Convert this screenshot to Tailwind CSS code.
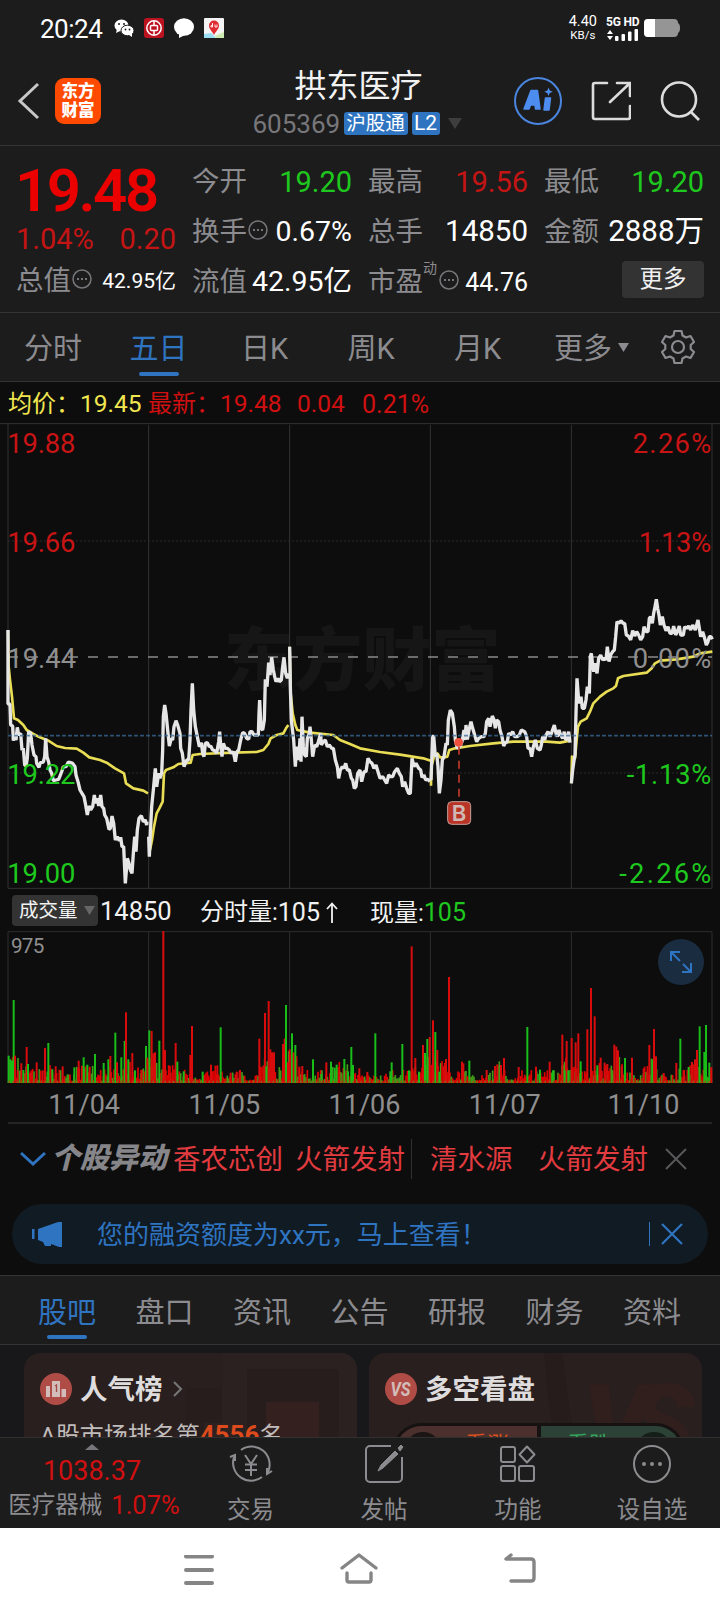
<!DOCTYPE html>
<html lang="zh-CN">
<head>
    <meta charset="UTF-8">
    <meta name="viewport" content="width=device-width, initial-scale=1.0">
    <title>拱东医疗 605369</title>
    <script src="https://cdn.jsdelivr.net/npm/@tailwindcss/browser@4"></script>
    <style>
        body { font-family: 'Roboto', 'Noto Sans CJK SC', sans-serif; }
    </style>
</head>
<body class="w-[720px] h-[1612px] overflow-hidden bg-[#0d0d0d] text-[#8c8c90] leading-none whitespace-nowrap">
    <!-- Barra de estado -->
    <div class="h-14 bg-[#1c1c1c] flex items-center justify-between pl-10 pr-10">
        <div class="flex items-center gap-[10px] text-white">
            <span class="text-[26px] tracking-[-0.5px] w-16 pt-px">20:24</span>
            <svg width="20" height="18" viewBox="0 0 20 18">
                <ellipse cx="7.5" cy="6.5" rx="7" ry="6" fill="#fff"/><path d="M3 10l-1 4 4-2z" fill="#fff"/>
                <ellipse cx="13.5" cy="11.5" rx="6.5" ry="5.3" fill="#fff" stroke="#1c1c1c"/><path d="M15 16l3 2v-4z" fill="#fff"/>
                <g fill="#1c1c1c"><circle cx="5" cy="5" r="1"/><circle cx="10" cy="5" r="1"/><circle cx="11.5" cy="10.5" r=".9"/><circle cx="15.5" cy="10.5" r=".9"/></g>
            </svg>
            <svg width="20" height="20" viewBox="0 0 20 20">
                <rect width="20" height="20" rx="3" fill="#bd1320"/>
                <g fill="none" stroke="#fff" stroke-width="1.5"><circle cx="10" cy="10" r="7.2"/><rect x="6.5" y="7.5" width="7" height="5" rx="1"/><path d="M10 3v4.500M10 12.500V17"/></g>
            </svg>
            <svg width="20" height="20" viewBox="0 0 20 20"><ellipse cx="10" cy="9" rx="10" ry="8.800" fill="#fff"/><path d="M5 15v5l6-3z" fill="#fff"/></svg>
            <svg width="20" height="20" viewBox="0 0 20 20">
                <rect width="20" height="20" rx="1" fill="#f4f4f4"/><path d="M0 16l7-1 5 5H0z" fill="#9adcf2"/><path d="M11 18l9-4v6h-8z" fill="#cdeab0"/>
                <path d="M10 17C8 13 5 11 5 7.500a5 5 0 0110 0C15 11 12 13 10 17z" fill="#e02b30"/><path d="M8.500 5v4H7V7.500h1.500M11 6.500V9h2V6.500" fill="none" stroke="#fff" stroke-width=".9"/>
            </svg>
        </div>
        <div class="flex items-center gap-[9px] text-white">
            <div class="text-center">
                <div class="text-[14.500px] h-[15px]">4.40</div>
                <div class="text-[11.500px] h-[11px]">KB/s</div>
            </div>
            <div class="w-[33px]">
                <div class="text-[12px] font-bold h-[14px] pt-px tracking-[-0.2px]">5G HD</div>
                <svg width="33" height="12" viewBox="0 0 33 12" fill="#fff"><path d="M1 5l3-4 3 4zM1 7l3 4 3-4z"/><rect x="9" y="7" width="3.500" height="5" rx="1"/><rect x="15.500" y="5" width="3.500" height="7" rx="1"/><rect x="22" y="2.500" width="3.500" height="9.500" rx="1"/><rect x="28.500" y="0" width="3.500" height="12" rx="1"/></svg>
            </div>
            <svg width="36" height="18" viewBox="0 0 36 18" class="-ml-1"><path d="M4 0h26a4 4 0 014 4q2 1 2 5t-2 5a4 4 0 01-4 4H4a4 4 0 01-4-4V4a4 4 0 014-4z" fill="#959595"/><path d="M4 0h7v18H4a4 4 0 01-4-4V4a4 4 0 014-4z" fill="#fff"/></svg>
        </div>
    </div>

    <!-- Cabecera -->
    <header class="h-[90px] bg-[#1c1c1c] border-b border-[#343434] grid grid-cols-[1fr_210px_1fr] items-center pl-4 pr-[19px]">
        <div class="flex items-center gap-[15px]">
            <svg width="24" height="40" viewBox="0 0 24 40" fill="none" stroke="#c8c8c8" stroke-width="3"><path d="M22 3L4 20l18 17"/></svg>
            <div class="w-[46px] h-[46px] rounded-[9px] bg-[#ff4a00] text-white text-[16.500px] leading-[19px] font-black text-center pt-1">东方<br>财富</div>
        </div>
        <div class="flex flex-col items-center pt-[3px]">
            <h1 class="text-[32px] text-[#f2f2f2] h-[42px] leading-[36px]">拱东医疗</h1>
            <div class="flex items-center pt-px -ml-[3px]">
                <span class="text-[26px] leading-[26px] w-[91px] text-[#77777b]">605369</span>
                <span class="h-[23px] w-16 rounded-[3px] bg-[#2f74c0] text-white text-[19.500px] leading-[23px] text-center">沪股通</span>
                <span class="h-[23px] w-7 ml-1 rounded-[3px] bg-[#2f74c0] text-white text-[21px] leading-[23px] text-center">L2</span>
                <svg width="14" height="11" viewBox="0 0 14 11" class="ml-2"><path d="M0 0h14L7 11z" fill="#3e3e3e"/></svg>
            </div>
        </div>
        <div class="flex items-center justify-end gap-[29px]">
            <svg width="48" height="48" viewBox="0 0 48 48">
                <circle cx="24" cy="24" r="23" fill="none" stroke="#4a86e0" stroke-width="2"/>
                <g fill="#4d8df0" stroke="#4d8df0" stroke-width="1.500" stroke-linejoin="round"><path fill-rule="evenodd" d="M10 32l7-18.500h6.500L26 32h-4.500l-.5-4h-4.500l-1.500 4zM18 24h2.500l-.5-5z"/><path d="M31.500 21h5l-1.500 12h-5z"/></g>
                <path d="M34.500 10.500l1.300 3 3 1.200-3 1.300-1.300 3-1.200-3-3-1.300 3-1.200z" fill="#4d8df0"/>
            </svg>
            <svg width="40" height="40" viewBox="0 0 40 40" fill="none" stroke="#dcdcdc" stroke-width="2.600"><path d="M16 2H4a2 2 0 00-2 2v32a2 2 0 002 2h33a2 2 0 002-2V25M26 2h13v13M38 3L19 21" stroke-linecap="round"/></svg>
            <svg width="41" height="40" viewBox="0 0 41 40" fill="none" stroke="#dcdcdc" stroke-width="2.600"><circle cx="19" cy="18.500" r="17"/><path d="M31 31l8 8"/></svg>
        </div>
    </header>

    <!-- Cotización -->
    <section class="h-[167px] bg-[#1c1c1c] border-b border-[#343434] pt-[11px] px-4 grid grid-cols-[160px_160px_160px_160px] gap-4 text-[27.500px]">
        <div>
            <div class="h-[66px] leading-[68px] text-[60px] font-semibold text-[#eb0000] tracking-[-2.5px] -ml-px">19.48</div>
            <div class="h-[33px] flex items-center justify-between text-[29px] text-[#c41414]"><span>1.04%</span><span>0.20</span></div>
            <div class="h-[50px] flex items-center"><span>总值</span>
                <svg width="20" height="20" viewBox="0 0 20 20" class="ml-px mb-1"><circle cx="10" cy="10" r="9" fill="none" stroke="#77777b" stroke-width="1.500"/><path d="M5 9h2v2H5zM9 9h2v2H9zM13 9h2v2h-2z" fill="#77777b"/></svg>
                <span class="ml-auto text-[21px] text-white">42.95亿</span></div>
        </div>
        <div>
            <div class="h-[50px] flex items-center justify-between"><span>今开</span><span class="text-[29px] text-[#1ec81e]">19.20</span></div>
            <div class="h-[50px] flex items-center"><span>换手</span>
                <svg width="20" height="20" viewBox="0 0 20 20" class="ml-px mb-1"><circle cx="10" cy="10" r="9" fill="none" stroke="#77777b" stroke-width="1.500"/><path d="M5 9h2v2H5zM9 9h2v2H9zM13 9h2v2h-2z" fill="#77777b"/></svg>
                <span class="ml-auto text-[28.500px] text-white">0.67%</span></div>
            <div class="h-[50px] flex items-center justify-between"><span>流值</span><span class="text-[28.500px] text-white">42.95亿</span></div>
        </div>
        <div>
            <div class="h-[50px] flex items-center justify-between"><span>最高</span><span class="text-[29px] text-[#c41414]">19.56</span></div>
            <div class="h-[50px] flex items-center justify-between"><span>总手</span><span class="text-[29.500px] text-white">14850</span></div>
            <div class="h-[50px] flex items-center"><span>市盈</span><span class="text-[14px] mb-7">动</span>
                <svg width="20" height="20" viewBox="0 0 20 20" class="ml-[2px] mb-1"><circle cx="10" cy="10" r="9" fill="none" stroke="#77777b" stroke-width="1.500"/><path d="M5 9h2v2H5zM9 9h2v2H9zM13 9h2v2h-2z" fill="#77777b"/></svg>
                <span class="ml-auto text-[25px] text-white">44.76</span></div>
        </div>
        <div>
            <div class="h-[50px] flex items-center justify-between"><span>最低</span><span class="text-[29px] text-[#1ec81e]">19.20</span></div>
            <div class="h-[50px] flex items-center justify-between"><span>金额</span><span class="text-[29.500px] text-white">2888万</span></div>
            <div class="h-[50px] flex items-center justify-end"><button class="w-[82px] h-[37px] rounded bg-[#333] text-[23.500px] text-[#f0f0f0] -mt-[6px] pt-px leading-none">更多</button></div>
        </div>
    </section>

    <!-- Pestañas de periodo -->
    <nav class="h-[69px] bg-[#1c1c1c] border-b border-[#343434] flex items-center text-[29px]">
        <span class="w-[106px] text-center pt-1">分时</span>
        <span class="w-[105px] h-full flex flex-col items-center text-[#2f74c0]"><span class="pt-[22px] h-[59px]">五日</span><i class="block w-10 h-1 rounded bg-[#2f74c0]"></i></span>
        <span class="w-[107px] text-center pt-1">日K</span>
        <span class="w-[106px] text-center pt-1">周K</span>
        <span class="w-[107px] text-center pt-1">月K</span>
        <span class="ml-[23px] pt-1">更多</span>
        <svg width="11" height="9" viewBox="0 0 11 9" class="ml-[6px]"><path d="M0 0h11L5.500 9z" fill="#8c8c90"/></svg>
        <svg width="36" height="36" viewBox="0 0 36 36" class="ml-[31px]" fill="none" stroke="#8c8c90" stroke-width="2.200" stroke-linejoin="round"><path d="M14.500 2h7l1 4.500 3.500 2 4.500-1.500 3.500 6-3.300 3v4l3.300 3-3.500 6-4.500-1.500-3.500 2-1 4.500h-7l-1-4.500-3.500-2L5.500 29 2 23l3.300-3v-4L2 13l3.500-6L10 8.500l3.500-2z"/><circle cx="18" cy="18" r="6"/></svg>
    </nav>

    <!-- Leyenda -->
    <div class="h-[41px] flex items-center pt-[3px] pl-2 text-[24.500px] text-[#d01010]">
        <span class="text-[#f2e650] w-[140px]"><span class="text-[24px]">均价：</span>19.45</span>
        <span class="w-[149px]"><span class="text-[24px]">最新：</span>19.48</span>
        <span class="w-[65px]">0.04</span>
        <span class="text-[25px]">0.21%</span>
    </div>

    <!-- Gráfico de precio -->
    <svg class="block" width="720" height="466" viewBox="0 9 2160 1398">
        <g font-family="Noto Sans CJK SC" font-weight="900" font-size="208" fill="#161616"><text x="672" y="795" textLength="830">东方财富</text></g>
        <g stroke="#333" stroke-width="3" fill="none">
            <path d="M0 11H2160M24 1405H2136M24 11V1405M446 15V1405M869 15V1405M1291 15V1405M1714 15V1405M2136 11V1405"/>
            <path d="M24 363H2136M24 1059H2136" stroke="#2a2a2a" stroke-dasharray="6 6"/>
        </g>
        <path d="M24 711H2136" stroke="#8a8a8a" stroke-width="5" stroke-dasharray="30 30"/>
        <g fill="none" stroke="#e8dd55" stroke-width="8" stroke-linejoin="round">
            <polyline points="24,630 26,740 30,780 36,830 42,895 54,900 70,915 80,930 100,942 120,952 145,962 170,978 195,984 230,986 250,998 268,1012 300,1020 320,1028 345,1045 372,1060 378,1090 400,1105 430,1112 444,1120"/>
            <polyline points="450,1290 456,1260 462,1220 470,1180 478,1165 488,1145 492,1060 498,1050 520,1042 535,1032 572,1028 578,1005 600,1002 700,998 770,996 790,990 805,972 812,955 830,945 850,940 858,925 865,915"/>
            <polyline points="869,680 872,820 878,880 886,915 892,930 930,938 1000,945 1020,960 1050,972 1080,985 1140,996 1200,1004 1270,1015 1292,1022"/>
            <g transform="translate(1080 0)">
                <polyline points="213,1097 214,1040 222,1010 232,1000 240,1012 255,1012 262,1010 268,990 285,985 330,978 400,970 460,965 560,965 600,968 630,962"/>
                <polyline points="634,1090 636,1010 645,1015 650,960 654,920 662,905 680,895 690,875 700,850 720,830 740,815 760,805 768,798 774,775 790,768 860,758 875,745 885,730 900,722 950,718 1000,710 1020,700 1057,695"/>
            </g>
        </g>
        <g fill="none" stroke="#e6e6e6" stroke-width="10" stroke-linejoin="bevel">
            <polyline points="24,630 24,852 30,852 32,915 38,918 40,962 44,945 48,960 52,922 56,945 62,940 66,990 70,985 74,1035 78,1038 82,1015 86,935 92,940 96,975 102,1005 108,1010 110,1030 117,1042 121,1028 130,1026 134,1010 137,955 141,1010 146,1026 150,1050 155,1060 160,1082 168,1080 176,1078 184,1058 190,1040 198,1040 205,1026 212,1028 218,1030 225,1040 228,1065 234,1085 240,1110 246,1120 252,1130 256,1150 262,1185 267,1158 272,1170 278,1160 283,1125 287,1150 292,1135 296,1158 302,1125 306,1160 311,1165 314,1185 320,1195 327,1228 331,1225 336,1188 341,1210 346,1260 352,1250 358,1262 362,1252 366,1280 371,1280 376,1390 382,1315 387,1330 391,1350 396,1360 400,1300 404,1250 408,1295 412,1230 417,1195 424,1187 430,1205 436,1200 440,1215 441,1205"/>
            <polyline points="446,1250 448,1310 451,1240 455,1160 460,1110 466,1045 470,1100 476,1060 480,1075 485,1060 488,990 490,890 494,855 498,880 503,930 508,978 514,955 518,960 522,920 528,902 533,915 540,940 542,985 547,1000 552,1040 560,1020 566,1020 570,960 573,870 577,790 581,870 586,920 592,950 598,980 604,968 608,1000 612,1010 616,970 622,968 628,980 632,978 638,990 644,992 650,1000 656,965 659,935 662,975 666,1010 670,970 676,985 682,985 688,990 694,1000 700,995 706,1025 711,995 716,990 722,960 728,938 734,940 740,955 746,958 750,935 756,935 762,945 770,945 775,945 777,880 779,840 783,925 788,930 793,900 796,778 801,800 806,728 810,765 815,712 820,750 824,770 828,785 834,775 838,785 844,780 848,740 852,712 857,760 862,775 865,760"/>
            <polyline points="869,680 871,800 874,900 878,935 881,960 886,1040 890,980 896,1020 900,955 903,1025 906,890 910,980 914,1005 919,1010 922,955 928,940 930,920 934,960 938,1010 944,975 950,980 955,965 962,940 964,975 970,965 976,960 982,980 988,975 995,985 1000,985 1006,1020 1012,1040 1016,1075 1021,1050 1027,1040 1032,1045 1037,1030 1042,1050 1048,1050 1054,1075 1058,1080 1063,1105 1068,1100 1073,1060 1080,1050 1085,1085 1092,1055 1098,1055 1104,1015 1110,1025 1116,1030 1122,1045 1128,1035 1134,1055 1140,1075 1148,1070 1154,1080 1160,1090 1166,1065 1172,1070 1178,1070 1184,1055 1192,1045 1198,1060 1204,1070 1208,1100 1214,1085 1220,1105 1226,1120 1231,1120 1236,1015 1242,1040 1248,1030 1256,1045 1262,1050 1266,1072 1272,1065 1277,1080 1284,1078 1290,1085"/>
            <g transform="translate(1080 0)">
                <polyline points="213,1080 216,1000 218,950 221,948 226,1010 230,1000 234,1040 238,1120 243,1080 247,1020 252,1010 258,970 262,975 265,900 271,870 277,880 283,920 286,960 292,985 300,980 306,965 312,930 315,960 318,915 322,958 328,925 333,905 338,925 344,945 350,965 356,955 364,950 372,950 376,940 380,905 386,895 390,920 397,888 402,900 406,925 410,900 416,905 420,930 426,950 431,978 436,968 442,965 446,940 452,945 458,935 464,950 472,950 478,945 484,930 494,935 500,950 504,985 510,985 515,1010 520,980 526,960 532,985 540,990 544,975 548,950 554,960 558,945 564,935 570,950 576,935 583,915 588,940 592,950 597,930 602,945 608,955 613,935 617,960 622,955 626,935 630,968"/>
                <polyline points="634,1090 638,1050 643,1015 645,1005 648,880 651,775 655,830 659,850 663,830 667,865 673,865 678,840 682,800 688,820 691,710 694,700 698,735 701,755 705,730 711,760 716,715 722,705 728,720 734,715 738,720 742,680 747,725 752,705 758,695 763,690 767,650 771,605 777,610 783,602 789,610 794,610 799,645 805,648 812,660 818,632 824,648 830,635 836,645 842,660 848,650 852,620 858,635 864,635 868,595 872,590 877,610 881,580 885,560 889,538 893,565 897,585 901,615 907,590 912,615 918,632 924,620 930,640 936,640 941,618 947,645 953,632 958,618 962,645 970,645 974,620 980,625 986,618 992,630 998,615 1006,630 1014,600 1018,625 1022,650 1028,635 1034,655 1039,675 1044,665 1048,650 1053,650 1057,658"/>
            </g>
        </g>
        <path d="M24 947H2136" stroke="#3a6a9a" stroke-opacity=".75" stroke-width="5" stroke-dasharray="12 6"/>
        <path d="M1377 980V1145" stroke="#c0392b" stroke-width="5" stroke-dasharray="24 18"/>
        <circle cx="1376" cy="967" r="13" fill="#f0503c"/>
        <rect x="1343" y="1145" width="69" height="68" rx="12" fill="#b83426" stroke="#c9a09a" stroke-width="3"/>
        <text x="1377" y="1203" text-anchor="middle" font-family="Inter" font-weight="600" font-size="66" fill="#d0b8b4">B</text>
        <g font-family="Roboto" font-size="82">
            <g fill="#c81414"><text x="22" y="100" textLength="204">19.88</text><text x="22" y="397" textLength="204">19.66</text></g>
            <text x="22" y="744" textLength="206" fill="#8f8f8f">19.44</text>
            <g fill="#1ec81e"><text x="22" y="1092" textLength="204">19.22</text><text x="22" y="1388" textLength="204">19.00</text></g>
            <g text-anchor="end">
                <g fill="#c81414"><text x="2134" y="100" textLength="236">2.26%</text><text x="2134" y="397" textLength="218">1.13%</text></g>
                <text x="2134" y="744" textLength="236" fill="#8f8f8f">0.00%</text>
                <g fill="#1ec81e"><text x="2134" y="1092" textLength="254">-1.13%</text><text x="2134" y="1388" textLength="276">-2.26%</text></g>
            </g>
        </g>
    </svg>

    <!-- Volumen -->
    <div class="h-[42px] flex items-center pl-3 text-[24px] text-[#f2f2f2]">
        <span class="w-[86px] h-[31px] rounded bg-[#333] flex items-center pl-[7px] pt-px gap-[6px] text-[19.500px]">成交量<svg width="11" height="9" viewBox="0 0 11 9"><path d="M0 0h11L5.500 9z" fill="#666"/></svg></span>
        <span class="ml-[2px] w-[100px] pt-1 text-[25.500px]">14850</span>
        <span class="w-[170px] pt-1 flex items-center">分时量:<span class="text-[25px]">105</span><svg width="12" height="21" viewBox="0 0 12 21" class="ml-[6px]" fill="none" stroke="#f2f2f2" stroke-width="1.800"><path d="M6 21V2M1 7l5-5.500L11 7"/></svg></span>
        <span class="pt-1">现量:<span class="text-[#1ec81e] text-[25px]">105</span></span>
    </div>
    <div class="relative h-[153px]">
        <svg class="block" width="720" height="153" viewBox="0 123 2160 459">
            <path d="M24 125H2136M24 125V579M446 125V579M869 125V579M1291 125V579M1714 125V579M2136 125V579" stroke="#2e2e2e" stroke-width="3"/>
            <g id="volumen"></g>
            <text x="33" y="188" font-family="Roboto" font-size="62" fill="#8f8f8f" textLength="100">975</text>
        </svg>
        <div class="absolute left-[658px] top-2 w-[46px] h-[46px] rounded-full bg-[#1a2c40] flex items-center justify-center">
            <svg width="24" height="24" viewBox="0 0 24 24" fill="none" stroke="#2f74c0" stroke-width="2"><path d="M2 11V2h9M2 2l9 9M22 13v9h-9M22 22l-8-8"/></svg>
        </div>
    </div>
    <div class="mx-2 h-10 border-b-2 border-[#252525] flex items-center pt-[5px] pl-[6px] text-[27px] text-[#8f8f8f]">
        <span class="w-[141px] text-center">11/04</span><span class="w-[141px] text-center">11/05</span><span class="w-[141px] text-center">11/06</span><span class="w-[141px] text-center">11/07</span><span class="w-[138px] text-center">11/10</span>
    </div>

    <!-- Movimientos -->
    <div class="h-[69px] flex items-center pl-5 text-[27.500px] text-[#e23b40]">
        <svg width="26" height="16" viewBox="0 0 26 16" fill="none" stroke="#2f74c0" stroke-width="3"><path d="M1 2l12 11L25 2"/></svg>
        <span class="ml-[5px] w-[122px] text-[29px] font-black italic text-[#86868a]">个股异动</span>
        <span class="w-[122px] pt-[2px]">香农芯创</span>
        <span class="w-[116px] pt-[2px]">火箭发射</span>
        <i class="w-px h-10 bg-[#303030]"></i>
        <span class="ml-[18px] w-[108px] pt-[2px]">清水源</span>
        <span class="w-[127px] pt-[2px]">火箭发射</span>
        <svg width="22" height="22" viewBox="0 0 22 22" stroke="#58585a" stroke-width="2"><path d="M1 1l20 20M21 1L1 21"/></svg>
    </div>
    <div class="mx-3 mt-[11px] h-[60px] rounded-full bg-[#111b24] flex items-center text-[26px] text-[#2f74c0]">
        <svg width="31" height="27" viewBox="0 0 31 27" class="ml-5" fill="#2f74c0"><path d="M0 8h2.500v10H0zM6 8l20-7h4v25h-3l-8-3v2h-6l-2-4-5-2z"/></svg>
        <span class="ml-[34px] w-[552px] pt-px">您的融资额度为xx元，马上查看！</span>
        <i class="w-px h-6 bg-[#2f74c0]"></i>
        <svg width="22" height="22" viewBox="0 0 22 22" class="ml-[11px]" stroke="#2f74c0" stroke-width="2.200"><path d="M1 1l20 20M21 1L1 21"/></svg>
    </div>

    <!-- Pestañas de contenido -->
    <nav class="mt-[11px] h-[70px] bg-[#1c1c1c] border-y border-[#343434] flex text-[29px] pl-[18px] pt-[23px]">
        <span class="w-[98px] flex flex-col items-center text-[#2f74c0]"><span class="h-9">股吧</span><i class="block w-10 h-1 rounded bg-[#2f74c0]"></i></span>
        <span class="w-[97px] text-center">盘口</span>
        <span class="w-[98px] text-center">资讯</span>
        <span class="w-[97px] text-center">公告</span>
        <span class="w-[98px] text-center">研报</span>
        <span class="w-[97px] text-center">财务</span>
        <span class="w-[98px] text-center">资料</span>
    </nav>

    <!-- Tarjetas -->
    <div class="h-[92px] overflow-hidden bg-[#18181a] pt-2 pl-6 flex gap-3">
        <div class="relative shrink-0 w-[333px] h-40 rounded-2xl bg-[#291f1e] overflow-hidden pl-4 pt-5">
            <svg class="absolute left-[160px] top-0" width="173" height="100" viewBox="0 0 173 100"><path d="M38 0h135v100H38z" fill="#2b2120"/><path d="M2 35h36v65H2zM63 16h92v84H63z" fill="#261d1c"/><path d="M82 49h53v51H82z" fill="#34211f"/><path d="M20 70h30v30H20z" fill="#2e2120"/></svg>
            <div class="relative flex items-center h-8">
                <svg width="32" height="32" viewBox="0 0 32 32"><circle cx="16" cy="16" r="16" fill="#b04c46"/><path d="M6 13h4v11H6zM12 8h8v16h-8zM21.500 16h4.500v8h-4.500z" fill="#d3bdba"/><path d="M15 13l1.500-1v7" fill="none" stroke="#a04a46" stroke-width="1.300"/></svg>
                <span class="ml-2 pt-px text-[27.500px] font-bold text-[#dedcdc]">人气榜</span>
                <svg width="10" height="16" viewBox="0 0 10 16" class="ml-[10px]" fill="none" stroke="#777" stroke-width="2"><path d="M1 1l7 7-7 7"/></svg>
            </div>
            <div class="relative mt-[17px] text-[24px] text-[#c0bcbc]">A股市场排名第<span class="font-bold text-[#dd4a1c] text-[26px]">4556</span>名</div>
        </div>
        <div class="relative shrink-0 w-[333px] h-40 rounded-2xl bg-[#291f1e] overflow-hidden pl-4 pt-5">
            <svg class="absolute left-[175px] top-0" width="158" height="100" viewBox="0 0 158 100"><path d="M0 0h18l14 100H10z" fill="#251c1b"/><text x="38" y="108" font-family="Roboto" font-weight="900" font-style="italic" font-size="108" fill="#301f1d" textLength="112">VS</text></svg>
            <div class="relative flex items-center h-8">
                <svg width="32" height="32" viewBox="0 0 32 32"><circle cx="16" cy="16" r="16" fill="#b04c46"/><text x="15.500" y="23" text-anchor="middle" font-family="Roboto" font-weight="700" font-style="italic" font-size="20" fill="#d3bdba" textLength="20" lengthAdjust="spacingAndGlyphs">VS</text></svg>
                <span class="ml-2 pt-[2px] text-[27.500px] font-bold text-[#dedcdc]">多空看盘</span>
            </div>
            <div class="relative mt-[18px] ml-2 w-[291px] h-14 rounded-full bg-[#171212] flex gap-1 p-[3px] overflow-hidden text-[22px] leading-[38px]">
                <span class="w-[141px] rounded-l-full bg-[#4c302d] text-[#d8501e] pl-[69px]">看涨</span>
                <span class="flex-1 rounded-r-full bg-[#2c4236] text-[#35a35c] pl-[26px]">看跌</span>
                <i class="absolute left-3 top-[9px] size-9 rounded-full bg-[#1b1515]"></i>
                <i class="absolute right-3 top-[9px] size-9 rounded-full bg-[#161e19]"></i>
            </div>
        </div>
    </div>

    <!-- Barra inferior -->
    <footer class="h-[91px] bg-[#1c1c1c] border-t border-[#303030] flex text-[23.500px]">
        <div class="w-[184px] flex flex-col items-center pt-[6px]">
            <svg width="14" height="6" viewBox="0 0 14 6"><path d="M0 6l7-6 7 6z" fill="#77777b"/></svg>
            <span class="mt-2 text-[27px] text-[#d01010]">1038.37</span>
            <div class="mt-2 pl-1 flex items-center gap-[9px]"><span class="text-[23.500px]">医疗器械</span><span class="text-[25.500px] text-[#d01010]">1.07%</span></div>
        </div>
        <div class="w-[133px] flex flex-col items-center pt-[6px] gap-[15px]">
            <svg width="44" height="40" viewBox="0 0 44 40" fill="none" stroke="#8c8c90" stroke-width="2"><path d="M12 6a18 18 0 0127 22M33 33A18 18 0 015 13M1 13l5-2v6M43 27l-5 3v-6M16 11l6 9 6-9M22 20v12M16 20.500h12M16 26h12"/></svg>
            <span>交易</span>
        </div>
        <div class="w-[134px] flex flex-col items-center pt-[6px] gap-[15px]">
            <svg width="40" height="40" viewBox="0 0 40 40" fill="none" stroke="#8c8c90" stroke-width="2"><path d="M27 2H6a4 4 0 00-4 4v28a4 4 0 004 4h28a4 4 0 004-4V13"/><path d="M31 7l3 3-15 14-5 3 3-6zM34 4l3-3 2 2-3 4z" fill="#8c8c90" stroke-width="1"/></svg>
            <span>发帖</span>
        </div>
        <div class="w-[134px] flex flex-col items-center pt-[6px] gap-[15px]">
            <svg width="40" height="40" viewBox="0 0 40 40" fill="none" stroke="#8c8c90" stroke-width="2"><rect x="3" y="3" width="14" height="15" rx="2"/><rect x="3" y="22" width="14" height="15" rx="2"/><rect x="21" y="22" width="15" height="15" rx="2"/><path d="M29 2.500l7.500 8-7.500 8-7.500-8z" stroke-linejoin="round"/></svg>
            <span>功能</span>
        </div>
        <div class="w-[134px] flex flex-col items-center pt-[6px] gap-[15px]">
            <svg width="40" height="40" viewBox="0 0 40 40" fill="none" stroke="#8c8c90" stroke-width="2"><circle cx="20" cy="20" r="18"/><g fill="#8c8c90" stroke="none"><circle cx="12" cy="20" r="2"/><circle cx="20" cy="20" r="2"/><circle cx="28" cy="20" r="2"/></g></svg>
            <span>设自选</span>
        </div>
    </footer>
    <div class="h-[84px] bg-white flex items-center justify-center gap-[124px]">
        <svg width="32" height="30" viewBox="0 0 32 30" stroke="#858585" stroke-width="4" stroke-linecap="round"><path d="M3 1.500h26M3 15h26M3 28h26"/></svg>
        <svg width="40" height="32" viewBox="0 0 40 32" class="mb-1" fill="none" stroke="#858585" stroke-width="3.400" stroke-linecap="round" stroke-linejoin="round"><path d="M3 16L20 3l17 13M8 21v7q0 2 2 2h20q2 0 2-2v-7"/></svg>
        <svg width="34" height="30" viewBox="0 0 34 30" class="mb-1" fill="none" stroke="#858585" stroke-width="3.400" stroke-linecap="round" stroke-linejoin="round"><path d="M8 2L3 6h25q3 0 3 3v16q0 3-3 3H8"/></svg>
    </div>

    <script>
        // picos: [x, y superior, color]; la base del gráfico está en y = 579
        const picos = [
            [26,497,'v'],[31,508,'v'],[36,512,'v'],[41,330,'v'],[45,497,'r'],[53,541,'r'],[64,520,'r'],[70,540,'v'],[80,471,'r'],[84,522,'v'],[92,548,'r'],[110,517,'r'],[128,541,'r'],[135,474,'r'],[145,459,'v'],[157,538,'v'],[167,529,'r'],[188,529,'r'],[223,532,'v'],[236,512,'r'],[246,527,'r'],[251,502,'v'],[262,524,'v'],[269,530,'r'],[285,492,'v'],[311,519,'v'],[325,508,'v'],[331,498,'r'],[346,428,'v'],[351,517,'r'],[364,502,'v'],[374,453,'v'],[378,367,'r'],[385,508,'v'],[397,489,'r'],[405,541,'v'],[424,540,'r'],[438,468,'v'],[442,503,'r'],[448,421,'v'],[455,423,'r'],[460,490,'r'],[465,487,'r'],[478,452,'v'],[490,123,'r'],[495,480,'r'],[512,548,'r'],[527,459,'r'],[532,515,'v'],[551,544,'v'],[571,495,'r'],[576,408,'r'],[608,545,'v'],[633,524,'r'],[652,526,'r'],[662,412,'v'],[692,548,'r'],[710,545,'r'],[720,540,'r'],[778,446,'r'],[795,369,'r'],[799,529,'v'],[806,333,'r'],[811,478,'r'],[816,487,'r'],[822,487,'r'],[849,462,'r'],[854,446,'r'],[858,345,'v'],[864,517,'r'],[869,478,'r'],[876,430,'v'],[881,487,'r'],[886,465,'v'],[898,530,'r'],[907,528,'r'],[939,508,'v'],[964,552,'v'],[979,517,'r'],[993,515,'v'],[1004,533,'v'],[1010,524,'v'],[1018,541,'r'],[1033,507,'v'],[1044,544,'v'],[1054,471,'v'],[1059,525,'v'],[1078,535,'r'],
            [1102,546,'r'],[1126,430,'v'],[1171,544,'v'],[1175,517,'v'],[1207,462,'v'],[1227,541,'v'],[1235,169,'r'],[1246,504,'r'],[1257,545,'v'],[1269,465,'r'],[1275,489,'v'],[1282,447,'v'],[1289,441,'r'],[1299,391,'r'],[1306,426,'v'],[1312,480,'r'],[1318,545,'v'],[1333,528,'r'],[1338,507,'r'],[1347,261,'r'],[1386,515,'r'],[1390,520,'r'],[1408,512,'v'],[1460,540,'r'],[1485,528,'r'],[1492,523,'r'],[1503,525,'r'],[1512,504,'r'],[1556,531,'r'],[1582,411,'v'],[1608,530,'r'],[1620,539,'v'],[1649,515,'r'],[1659,541,'v'],[1687,434,'r'],[1695,541,'v'],[1700,453,'r'],[1705,541,'v'],[1715,444,'r'],[1727,457,'r'],[1735,430,'r'],[1742,514,'v'],[1762,418,'r'],[1773,294,'r'],[1784,379,'r'],[1792,526,'v'],[1802,503,'r'],[1814,518,'r'],[1822,522,'r'],[1843,464,'r'],[1849,470,'r'],[1854,481,'r'],[1865,528,'r'],[1875,504,'v'],[1896,503,'r'],[1931,535,'r'],[1942,544,'r'],[1948,465,'r'],[1958,508,'v'],[1962,417,'r'],[1968,499,'r'],[1991,549,'r'],[2029,519,'r'],[2041,446,'v'],[2052,540,'r'],[2066,531,'v'],[2076,516,'r'],[2085,508,'r'],[2091,480,'r'],[2099,409,'v'],[2113,486,'v'],[2118,405,'v'],[2128,518,'v'],[2134,531,'r']
        ];
        const colores = { r: '#d80c0c', v: '#18bd18' };
        const grupo = document.getElementById('volumen');
        let semilla = 17;

        function azar() {
            semilla = (semilla * 16807) % 2147483647;
            return semilla / 2147483647;
        }

        function barra(x, y, color, ancho) {
            const r = document.createElementNS('http://www.w3.org/2000/svg', 'rect');
            r.setAttribute('x', x - ancho / 2);
            r.setAttribute('y', y);
            r.setAttribute('width', ancho);
            r.setAttribute('height', 579 - y);
            r.setAttribute('fill', color);
            grupo.appendChild(r);
        }

        // relleno de barras pequeñas, más altas cerca de los picos
        for (let x = 26; x < 2136; x += 4) {
            const cerca = picos.filter(p => Math.abs(p[0] - x) < 18).length;
            const alto = 6 + azar() * (6 + cerca * 14);
            barra(x, 579 - alto, azar() > 0.36 ? '#e00000' : '#3f9a18', 5);
        }
        picos.forEach(p => barra(p[0], p[1], colores[p[2]], 6));
        for (let x = 28; x < 2136; x += 12) barra(x, 572, '#9a5a10', 5);
    </script>
</body>
</html>
